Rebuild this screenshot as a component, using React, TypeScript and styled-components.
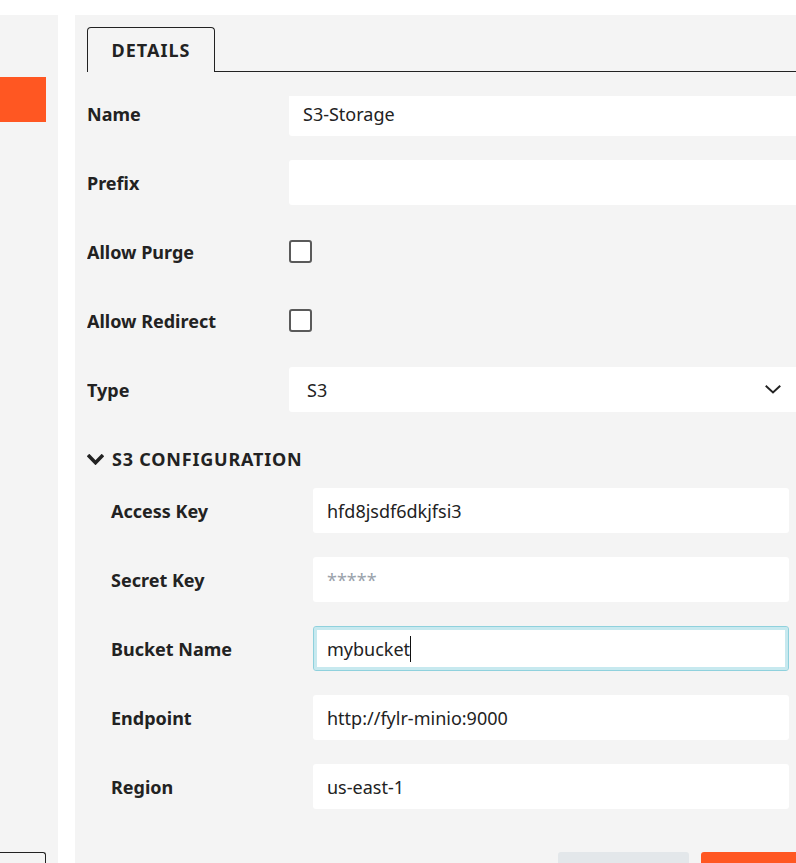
import styled, { createGlobalStyle } from 'styled-components'

const GlobalStyle = createGlobalStyle`
  html, body {
    margin: 0;
    padding: 0;
    background: #ffffff;
    overflow: hidden;
  }
  body {
    font-family: "Noto Sans", Lato, "Liberation Sans", sans-serif;
    color: #222222;
  }
  * {
    box-sizing: border-box;
  }
`

const StyledPage = styled.div`
  display: flex;
  gap: 17px;
  width: 837px;
  height: 100vh;
  padding-top: 15px;
`

const StyledSidebar = styled.div`
  width: 58px;
  flex-shrink: 0;
  background: #f4f4f4;
  display: flex;
  flex-direction: column;
  padding-top: 62px;
`

const StyledNavItem = styled.div<{ $active?: boolean }>`
  width: 46px;
  height: 45px;
  background: ${p => (p.$active ? '#ff5722' : 'transparent')};
`

const StyledSidebarButton = styled.div`
  margin-top: auto;
  width: 46px;
  height: 11px;
  border: 1px solid #222222;
  border-bottom: none;
  border-left: none;
  border-radius: 0 3px 0 0;
`

const StyledMain = styled.div`
  width: 750px;
  flex-shrink: 0;
  background: #f4f4f4;
  padding: 12px 12px 0;
  display: flex;
  flex-direction: column;
  overflow: hidden;
`

const StyledTabBar = styled.div`
  display: flex;
  border-bottom: 1px solid #222222;
`

const StyledTab = styled.div`
  width: 128px;
  height: 45px;
  margin-bottom: -1px;
  border: 1px solid #222222;
  border-bottom: none;
  border-radius: 4px 4px 0 0;
  background: #f4f4f4;
  display: flex;
  align-items: center;
  justify-content: center;
  font-weight: 700;
  font-size: 18px;
  letter-spacing: 1px;
  text-transform: uppercase;
`

const StyledScroll = styled.div`
  margin-top: 24px;
  flex: 1;
  overflow: hidden;
`

const StyledForm = styled.div`
  margin-top: -5px;
  display: flex;
  flex-direction: column;
  gap: 24px;
`

const StyledRow = styled.div`
  display: grid;
  grid-template-columns: 202px 1fr;
  align-items: center;
  height: 45px;
`

const StyledLabel = styled.label`
  font-weight: 700;
  font-size: 18px;
  color: #222222;
`

const StyledInput = styled.input`
  width: 100%;
  height: 45px;
  border: none;
  border-radius: 3px;
  background: #ffffff;
  padding: 0 14px;
  font-family: inherit;
  font-size: 18px;
  color: #222222;
  outline: none;

  &::placeholder {
    color: #9aa2ab;
  }
`

const StyledFocusedField = styled.div`
  height: 45px;
  border: 1px solid #8fd1dd;
  box-shadow: inset 0 0 0 3px #c7e9ef;
  border-radius: 3px;
  background: #ffffff;
  padding: 0 13px;
  display: flex;
  align-items: center;
  font-size: 18px;
`

const StyledCaret = styled.span`
  display: inline-block;
  width: 1px;
  height: 26px;
  background: #111111;
`

const StyledCheckbox = styled.input.attrs({ type: 'checkbox' })`
  appearance: none;
  margin: 0;
  width: 23px;
  height: 23px;
  border: 2px solid #5a5a5a;
  border-radius: 3px;
  background: #ffffff;
`

const StyledSelect = styled.div`
  height: 45px;
  border-radius: 3px;
  background: #ffffff;
  padding: 0 32px 0 18px;
  display: flex;
  align-items: center;
  justify-content: space-between;
  font-size: 18px;
`

const StyledSection = styled.div`
  display: flex;
  flex-direction: column;
`

const StyledSectionHeader = styled.div`
  height: 46px;
  display: flex;
  align-items: center;
  gap: 8px;
  font-weight: 700;
  font-size: 18px;
  letter-spacing: 0.8px;
  text-transform: uppercase;
`

const StyledSubFields = styled.div`
  padding: 6px 24px 0;
  display: flex;
  flex-direction: column;
  gap: 24px;
`

const StyledFooter = styled.div`
  margin-top: 19px;
  display: flex;
  justify-content: flex-end;
  gap: 12px;
`

const StyledButton = styled.button<{ $primary?: boolean }>`
  width: ${p => (p.$primary ? '112px' : '131px')};
  height: 40px;
  border: none;
  border-radius: 3px;
  background: ${p => (p.$primary ? '#ff5722' : '#e3e7ea')};
`

const ChevronDown = ({ width, height, stroke }: { width: number; height: number; stroke: number }) => (
  <svg width={width} height={height} viewBox={`0 0 ${width} ${height}`} fill="none">
    <polyline
      points={`${stroke / 2 + 0.5},${stroke / 2 + 0.5} ${width / 2},${height - stroke / 2 - 0.5} ${width - stroke / 2 - 0.5},${stroke / 2 + 0.5}`}
      stroke="#222222"
      strokeWidth={stroke}
      strokeLinecap="square"
    />
  </svg>
)

type Field = {
  label: string
  value?: string
  placeholder?: string
  focused?: boolean
}

const s3Fields: Field[] = [
  { label: 'Access Key', value: 'hfd8jsdf6dkjfsi3' },
  { label: 'Secret Key', placeholder: '*****' },
  { label: 'Bucket Name', value: 'mybucket', focused: true },
  { label: 'Endpoint', value: 'http://fylr-minio:9000' },
  { label: 'Region', value: 'us-east-1' },
]

const App = () => {
  return (
    <>
      <GlobalStyle />
      <StyledPage>
        <StyledSidebar>
          <StyledNavItem $active />
          <StyledSidebarButton />
        </StyledSidebar>

        <StyledMain>
          <StyledTabBar>
            <StyledTab>Details</StyledTab>
          </StyledTabBar>

          <StyledScroll>
            <StyledForm>
              <StyledRow>
                <StyledLabel>Name</StyledLabel>
                <StyledInput readOnly value="S3-Storage" />
              </StyledRow>
              <StyledRow>
                <StyledLabel>Prefix</StyledLabel>
                <StyledInput readOnly value="" />
              </StyledRow>
              <StyledRow>
                <StyledLabel>Allow Purge</StyledLabel>
                <StyledCheckbox readOnly />
              </StyledRow>
              <StyledRow>
                <StyledLabel>Allow Redirect</StyledLabel>
                <StyledCheckbox readOnly />
              </StyledRow>
              <StyledRow>
                <StyledLabel>Type</StyledLabel>
                <StyledSelect>
                  <span>S3</span>
                  <ChevronDown width={16} height={9} stroke={2} />
                </StyledSelect>
              </StyledRow>

              <StyledSection>
                <StyledSectionHeader>
                  <ChevronDown width={17} height={11} stroke={3.5} />
                  S3 Configuration
                </StyledSectionHeader>
                <StyledSubFields>
                  {s3Fields.map(field => (
                    <StyledRow key={field.label}>
                      <StyledLabel>{field.label}</StyledLabel>
                      {field.focused ? (
                        <StyledFocusedField>
                          {field.value}
                          <StyledCaret />
                        </StyledFocusedField>
                      ) : (
                        <StyledInput readOnly value={field.value ?? ''} placeholder={field.placeholder} />
                      )}
                    </StyledRow>
                  ))}
                </StyledSubFields>
              </StyledSection>

              <StyledFooter>
                <StyledButton aria-label="Cancel" />
                <StyledButton $primary aria-label="Save" />
              </StyledFooter>
            </StyledForm>
          </StyledScroll>
        </StyledMain>
      </StyledPage>
    </>
  )
}

export default App
